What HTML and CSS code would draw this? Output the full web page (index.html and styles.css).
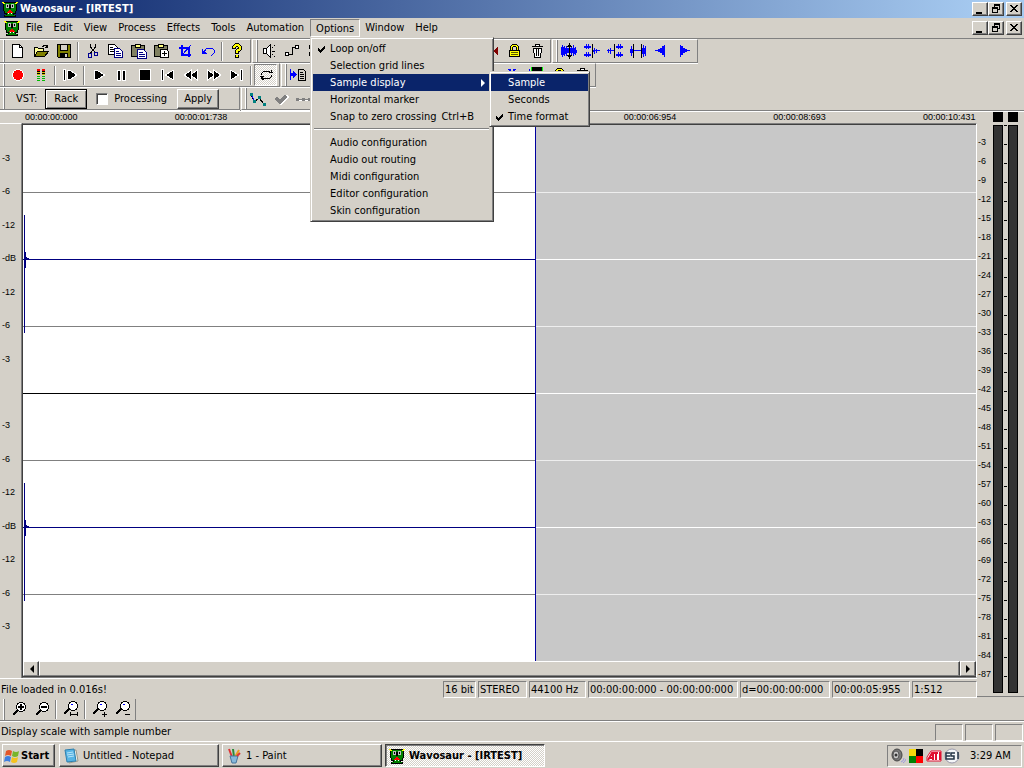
FILE: index.html
```html
<!DOCTYPE html>
<html lang="en">
<head>
<meta charset="utf-8">
<title>Wavosaur - [IRTEST]</title>
<link rel="stylesheet" href="styles.css">
</head>
<body>
<svg class="defs" aria-hidden="true">
  <symbol id="dino" viewBox="0 0 16 16">
    <path fill="#000" d="M1 1h14v9h-1v3h-2v1h2v2H2v-2h2v-1H2v-3H1z"/>
    <path fill="#008000" d="M2 2h12v8h-1v2H3v-2H2zM5 12h6v2h2v1H3v-1h2z"/>
    <path fill="#ff0" d="M0 1h2v1h1v1H1V2H0zM14 1h2v1h-1v1h-2V2h1z"/>
    <path fill="#000" d="M4 3h3v1h2V3h3v4H9v1H7V7H4z"/>
    <path fill="#c0c0c0" d="M4 3h3v4H4zM9 3h3v4H9z"/>
    <path fill="#000" d="M5 4h1v2H5zM10 4h1v2h-1z"/>
    <path fill="red" d="M7 9h2v1h1v1h1v1H5v-1h1v-1h1z"/>
    <path fill="#fff" d="M6 12h1v1H6zM9 12h1v1H9z"/>
  </symbol>
  <symbol id="min" viewBox="0 0 12 10"><path d="M2 8h6v2H2z"/></symbol>
  <symbol id="restore" viewBox="0 0 12 10"><path d="M4 0h6v6H8V5h1V2H5v1H4zM2 3h6v6H2zM3 5v3h4V5z" fill-rule="evenodd"/></symbol>
  <symbol id="close" viewBox="0 0 12 10"><path d="M2 1h2v1h1v1h2V2h1V1h2v1H9v1H8v1H7v1h1v1h1v1h1v1H8V7H7V6H5v1H4v1H2V7h1V6h1V5h1V4H4V3H3V2H2z"/></symbol>
  <symbol id="new" viewBox="0 0 16 16"><path fill="#fff" stroke="#000" d="M2.500 1.500h7l3 3v10h-10z"/><path fill="none" stroke="#000" d="M9.500 1.500v3h3"/></symbol>
  <symbol id="open" viewBox="0 0 16 16"><path fill="#ffff99" stroke="#000" d="M1.500 13.500v-9h3l1 1h5v3"/><path fill="#808000" stroke="#000" d="M1.500 13.500l3-5h11l-4 5z"/><path fill="none" stroke="#000" d="M9 3.500h1v-1h3v1h1v1M12 4.500h3M14.500 2v3"/></symbol>
  <symbol id="save" viewBox="0 0 16 16"><path fill="#808000" stroke="#000" d="M1.500 1.500h13v13h-12l-1-1z"/><path fill="#d4d0c8" stroke="#000" d="M4.500 1.500h7v6h-7z"/><path d="M4 10h8v5H4z"/><path fill="#d4d0c8" d="M9 11h2v3H9z"/></symbol>
  <symbol id="cut" viewBox="0 0 16 16"><path fill="none" stroke="#000" d="M5.500 1v3l5 6M10.500 1v3l-5 6"/><path fill="none" stroke="#000090" d="M3.500 10.500h3v4h-3zM9.500 9.500h3v3h-3z"/></symbol>
  <symbol id="copy" viewBox="0 0 16 16"><path fill="#fff" stroke="#000" d="M.5 1.500h6l3 3v7h-9z"/><path stroke="#000" d="M2 4.500h3M2 6.500h5M2 8.500h5"/><path fill="#fff" stroke="#000080" d="M6.500 5.500h5l3 3v6h-8z"/><path stroke="#000080" d="M8 8.500h3M8 10.500h5M8 12.500h5"/></symbol>
  <symbol id="paste" viewBox="0 0 16 16"><path fill="#808060" stroke="#000" d="M.5 2.500h13v11H.5z"/><path fill="#ffff80" stroke="#000" d="M4.500 1.500h5v3h-5z"/><path fill="#fff" stroke="#000080" d="M6.500 6.500h6l3 3v6h-9z"/><path stroke="#000080" d="M8 9.500h4M8 11.500h6M8 13.500h6"/></symbol>
  <symbol id="pasteplus" viewBox="0 0 16 16"><path fill="#808060" stroke="#000" d="M.5 2.500h13v11H.5z"/><path fill="#ffff80" stroke="#000" d="M4.500 1.500h5v3h-5z"/><path fill="#fff" stroke="#000" d="M6.500 6.500h6l2 2v6h-8zM8 10.500h5M10.500 8v5"/></symbol>
  <symbol id="crop" viewBox="0 0 16 16"><path fill="none" stroke="#00f" stroke-width="2" d="M5 2v10h9M2 5h10v9"/><path stroke="#00f" d="M5 12l9-10"/></symbol>
  <symbol id="undo" viewBox="0 0 16 16"><path fill="none" stroke="#00f" d="M4 9l3-4h5l2 2v3l-3 3"/><path fill="#00f" d="M2 6v5h5v-1H6V9H5V8H3V6z"/></symbol>
  <symbol id="help" viewBox="0 0 16 16"><path fill="none" stroke="#000" stroke-width="4" d="M5 6V4l2-2h2l2 2v2L8 8v3M8 12v3"/><path fill="none" stroke="#ff0" stroke-width="2" d="M5 5V4l2-2h2l2 2v2L8 8v2M8 12v2"/></symbol>
  <symbol id="speaker" viewBox="0 0 16 16"><path fill="#fff" stroke="#000" d="M2.500 5.500h3l4-4v13l-4-4h-3zM5.500 5v6"/><path stroke="#000" d="M11 4.500h1M13 2.500h1M11 8.500h3M11 11.500h1M13 13.500h1"/></symbol>
  <symbol id="auto" viewBox="0 0 16 16"><path fill="none" stroke="#000" d="M3.500 11.500h5v-7h3"/><path fill="#fff" stroke="#000" d="M1.500 9.500h3v3h-3zM11.500 2.500h3v3h-3z"/></symbol>
  <symbol id="nodes" viewBox="0 0 16 16"><path fill="#fff" stroke="#000" d="M2.500 2.500h3v3h-3zM2.500 9.500h3v3h-3zM5 4.500h8M5 11.500h8"/></symbol>
  <symbol id="lock" viewBox="0 0 16 16"><path fill="none" stroke="#000" stroke-width="3" d="M5.500 8V4l2-2h2l2 2v4"/><path fill="none" stroke="#ff0" d="M5.500 8V4l2-2h2l2 2v4"/><path fill="#ff0" stroke="#000" d="M3.500 7.500h10v6h-10z"/><path stroke="#555500" d="M5 9.500h7M5 11.500h7"/></symbol>
  <symbol id="trash" viewBox="0 0 16 16"><path fill="#fff" stroke="#000" d="M4.500 5.500h8l-1 9h-6zM3 3.500h11M6.500 3v-1.500h4V3M7.500 6v7M9.500 6v7"/></symbol>
  <symbol id="redarrow" viewBox="0 0 16 16"><path fill="#800000" d="M10 8l5-5v10z"/></symbol>
  <symbol id="w1" viewBox="0 0 16 16"><path fill="#00f" d="M0 4h1V2h1v2h1V3h1v2h1V3h1v2h4V3h1v2h1V2h1v3h1V4h1v3h1v3h-1v2h-1v-1h-1v2h-1v-3h-1v2h-1v-2H6v3H5v-2H4v2H3v-1H2v2H1v-2H0z"/><path stroke="#000" d="M8.500 0v16M6 3.500h5M6 12.500h5M7 2.500h3M7 13.500h3"/></symbol>
  <symbol id="w2" viewBox="0 0 16 16"><path fill="#00f" d="M0 3h2V1h1v2h1V1h1v2h2v2H5v1H4V5H3v1H2V5H0zM0 11h2V9h1v2h1V9h1v2h2v2H5v1H4v-1H3v1H2v-1H0zM9 7h1V5h1v2h1V6h1v1h3v1h-3v2h-1V8h-1v3h-1V9H9z"/><path stroke="#000" d="M8.500 1v14"/></symbol>
  <symbol id="w3" viewBox="0 0 16 16"><path fill="#00f" d="M0 7h1V6h1v1h1V5h1v2h3v1H4v3H3V8H2v2H1V8H0zM9 3h2V1h1v2h1V1h1v2h2v2h-2v1h-1V5h-1v1h-1V5H9zM9 11h2V9h1v2h1V9h1v2h2v2h-2v1h-1v-1h-1v1h-1v-1H9z"/><path stroke="#000" d="M7.500 1v14"/></symbol>
  <symbol id="w4" viewBox="0 0 16 16"><path fill="#00f" d="M0 6h1V3h1v3h1v4H2v3H1v-3H0zM3 7h10v1H3zM12 5h1V2h1v3h1V3h1v10h-1v-2h-1v3h-1v-3h-1z"/><path stroke="#000" d="M3.500 1v14M11.500 1v14"/></symbol>
  <symbol id="w5" viewBox="0 0 16 16"><path fill="#00f" d="M2 7h3V6h2V5h2V3h2V2h1v12h-1v-2H9v-2H7V9H5V8H2z"/></symbol>
  <symbol id="w6" viewBox="0 0 16 16"><path fill="#00f" d="M14 7h-3V6H9V5H7V3H5V2H4v12h1v-2h2v-2h2V9h2V8h3z"/></symbol>
  <symbol id="rec" viewBox="0 0 16 16"><circle cx="8" cy="8" r="5.500" fill="red" stroke="#fff"/></symbol>
  <symbol id="levels" viewBox="0 0 16 16"><path stroke="red" stroke-width="2" d="M4 3h3M9 3h3"/><path stroke="#d0c000" d="M4 5.500h3M9 5.500h3M4 7.500h3M9 7.500h3"/><path stroke="#0b0" d="M4 9.500h3M9 9.500h3M4 11.500h3M9 11.500h3M4 13.500h3M9 13.500h3"/><path stroke="#000" d="M4 4.500h3M9 4.500h3M4 6.500h3M9 6.500h3"/></symbol>
  <symbol id="playfrom" viewBox="0 0 16 16"><path class="halo" d="M2 3h1v10H2z"/><path class="halo" d="M6 4h2l6 4-6 4H6z"/></symbol>
  <symbol id="play" viewBox="0 0 16 16"><path class="halo" d="M4 4h2l7 4-7 4H4z"/></symbol>
  <symbol id="pause" viewBox="0 0 16 16"><path class="halo" d="M4 4h2v9H4zM9 4h2v9H9z"/></symbol>
  <symbol id="stop" viewBox="0 0 16 16"><path class="halo" d="M3 3h10v10H3z"/></symbol>
  <symbol id="prev" viewBox="0 0 16 16"><path class="halo" d="M2 3h1v10H2zM13 4v8L6 8z"/></symbol>
  <symbol id="rew" viewBox="0 0 16 16"><path class="halo" d="M8 4v8L2 8zM14 4v8L8 8z"/></symbol>
  <symbol id="ff" viewBox="0 0 16 16"><path class="halo" d="M2 4v8l6-4zM8 4v8l6-4z"/></symbol>
  <symbol id="next" viewBox="0 0 16 16"><path class="halo" d="M2 4v8l7-4zM12 3h1v10h-1z"/></symbol>
  <symbol id="loop" viewBox="0 0 16 16"><path fill="none" stroke="#000" d="M3.500 8V6.500l2-2h6l1 1M13.500 8v1.500l-2 2h-6l-1-1"/><path d="M2 9h4v1H5v1h1v2H4v-1H3v-2H2zM11 6h4V5h-1V3h-1v2h-2z"/></symbol>
  <symbol id="todoc" viewBox="0 0 16 16"><path fill="#00f" d="M0 2h1v4h2V4h1v1h1v1h1v1h1v1H6v1H5v1H4v1H3V9H1v4H0z"/><path fill="#d4d0c8" stroke="#000" d="M8.500 2.500h5l2 2v9h-7zM10 5.500h3M10 7.500h4M10 9.500h4M10 11.500h4"/></symbol>
  <symbol id="wx" viewBox="0 0 16 16"><path stroke="#00f" stroke-width="2" d="M4 2l6 8M10 2l-6 8"/></symbol>
  <symbol id="mark" viewBox="0 0 16 16"><path fill="#00f" d="M1 2h1v2h2v1H1z"/><path fill="#0f0" d="M3 0h12v6H3z"/><path d="M4 0h10v6H4z"/></symbol>
  <symbol id="curve" viewBox="0 0 16 16"><path fill="none" stroke="#000" d="M1 3l3 8 5-4 5 6"/><path fill="#008080" d="M0 2h3v3H0zM3 9h3v3H3zM8 5h3v3H8zM13 12h3v3h-3z"/><path stroke="#00f" d="M2 5l2 4"/></symbol>
  <symbol id="tick" viewBox="0 0 16 16"><path fill="none" stroke="#fff" stroke-width="3" d="M4 8l4 4 7-7"/><path fill="none" stroke="#808080" stroke-width="3" d="M3 7l4 4 6-6"/></symbol>
  <symbol id="dots" viewBox="0 0 16 16"><path stroke="#fff" d="M1 9.500h15"/><path stroke="#808080" d="M0 8.500h16"/><path fill="#808080" d="M0 7h3v3H0zM6 7h3v3H6zM12 7h3v3h-3z"/></symbol>
  <symbol id="zin" viewBox="0 0 16 16"><path stroke="#000" stroke-width="2" d="M2 14l5-5"/><circle cx="10" cy="6" r="4.500" fill="#fff" stroke="#000"/><path stroke="#000" stroke-width="2" d="M7 6h6M10 3v6"/></symbol>
  <symbol id="zout" viewBox="0 0 16 16"><path stroke="#000" stroke-width="2" d="M2 14l5-5"/><circle cx="10" cy="6" r="4.500" fill="#fff" stroke="#000"/><path stroke="#000" stroke-width="2" d="M7 6h6"/></symbol>
  <symbol id="zsel" viewBox="0 0 16 16"><path stroke="#000" stroke-width="2" d="M1 13l5-5"/><circle cx="10" cy="5" r="4.500" fill="#fff" stroke="#000"/><path stroke="#00f" d="M8 3.500h2"/><path stroke="#000" d="M7 13.500h8M7.500 11v4M14.500 11v4"/></symbol>
  <symbol id="zv" viewBox="0 0 16 16"><path stroke="#000" stroke-width="2" d="M1 13l5-5"/><circle cx="10" cy="5" r="4.500" fill="#fff" stroke="#000"/><path stroke="#00f" d="M8 3.500h2"/><path stroke="#000" d="M10 13.500h5M12.500 11v5"/></symbol>
  <symbol id="zvo" viewBox="0 0 16 16"><path stroke="#000" stroke-width="2" d="M1 13l5-5"/><circle cx="10" cy="5" r="4.500" fill="#fff" stroke="#000"/><path stroke="#00f" d="M8 3.500h2"/><path stroke="#000" d="M10 13.500h5"/></symbol>
  <symbol id="check" viewBox="0 0 8 8"><path d="M0 3h1v1h1v1h1V4h1V3h1V2h1V1h1v3H6v1H5v1H4v1H3v1H2V7H1V6H0z"/></symbol>
</svg>

<header class="titlebar">
  <svg class="ico"><use href="#dino"/></svg>
  <h1>Wavosaur - [IRTEST]</h1>
  <div class="winbtns">
    <button aria-label="Minimize"><svg><use href="#min"/></svg></button>
    <button aria-label="Restore"><svg><use href="#restore"/></svg></button>
    <button aria-label="Close"><svg><use href="#close"/></svg></button>
  </div>
</header>

<nav class="menubar">
  <svg class="ico"><use href="#dino"/></svg>
  <button>File</button><button>Edit</button><button>View</button><button>Process</button><button>Effects</button><button>Tools</button><button>Automation</button>
  <div class="dropdown">
    <button class="active">Options</button>
    <div class="menu menu-options">
      <button><svg class="check"><use href="#check"/></svg>Loop on/off</button>
      <button>Selection grid lines</button>
      <button class="selected">Sample display<i class="arrow"></i></button>
      <button>Horizontal marker</button>
      <button>Snap to zero crossing<kbd>Ctrl+B</kbd></button>
      <hr>
      <button>Audio configuration</button>
      <button>Audio out routing</button>
      <button>Midi configuration</button>
      <button>Editor configuration</button>
      <button>Skin configuration</button>
      <div class="menu menu-sub">
        <button class="selected">Sample</button>
        <button>Seconds</button>
        <button><svg class="check"><use href="#check"/></svg>Time format</button>
      </div>
    </div>
  </div>
  <button>Window</button><button>Help</button>
  <div class="winbtns">
    <button aria-label="Minimize document"><svg><use href="#min"/></svg></button>
    <button aria-label="Restore document"><svg><use href="#restore"/></svg></button>
    <button aria-label="Close document"><svg><use href="#close"/></svg></button>
  </div>
</nav>

<section class="toolbars">
  <div class="row">
    <div class="band">
      <button aria-label="New"><svg class="ico"><use href="#new"/></svg></button>
      <button aria-label="Open"><svg class="ico"><use href="#open"/></svg></button>
      <button aria-label="Save"><svg class="ico"><use href="#save"/></svg></button>
      <i class="sep"></i>
      <button aria-label="Cut"><svg class="ico"><use href="#cut"/></svg></button>
      <button aria-label="Copy"><svg class="ico"><use href="#copy"/></svg></button>
      <button aria-label="Paste"><svg class="ico"><use href="#paste"/></svg></button>
      <button aria-label="Paste mix"><svg class="ico"><use href="#pasteplus"/></svg></button>
      <button aria-label="Crop"><svg class="ico"><use href="#crop"/></svg></button>
      <button aria-label="Undo"><svg class="ico"><use href="#undo"/></svg></button>
      <i class="sep"></i>
      <button aria-label="Help"><svg class="ico"><use href="#help"/></svg></button>
    </div>
    <div class="band band-edit">
      <button aria-label="Volume"><svg class="ico"><use href="#speaker"/></svg></button>
      <button aria-label="Automation"><svg class="ico"><use href="#auto"/></svg></button>
      <button aria-label="Nodes"><svg class="ico"><use href="#nodes"/></svg></button>
      <button class="push" aria-label="Previous marker"><svg class="ico"><use href="#redarrow"/></svg></button>
      <button aria-label="Lock"><svg class="ico"><use href="#lock"/></svg></button>
      <button aria-label="Delete"><svg class="ico"><use href="#trash"/></svg></button>
    </div>
    <div class="band">
      <button aria-label="Zoom wave"><svg class="ico"><use href="#w1"/></svg></button>
      <button aria-label="Merge"><svg class="ico"><use href="#w2"/></svg></button>
      <button aria-label="Split"><svg class="ico"><use href="#w3"/></svg></button>
      <button aria-label="Silence"><svg class="ico"><use href="#w4"/></svg></button>
      <button aria-label="Fade in"><svg class="ico"><use href="#w5"/></svg></button>
      <button aria-label="Fade out"><svg class="ico"><use href="#w6"/></svg></button>
    </div>
  </div>
  <div class="row">
    <div class="band">
      <button aria-label="Record"><svg class="ico"><use href="#rec"/></svg></button>
      <button aria-label="Levels"><svg class="ico"><use href="#levels"/></svg></button>
      <i class="sep"></i>
      <button aria-label="Play from cursor"><svg class="ico"><use href="#playfrom"/></svg></button>
      <i class="sep"></i>
      <button aria-label="Play"><svg class="ico"><use href="#play"/></svg></button>
      <button aria-label="Pause"><svg class="ico"><use href="#pause"/></svg></button>
      <button aria-label="Stop"><svg class="ico"><use href="#stop"/></svg></button>
      <button aria-label="Start"><svg class="ico"><use href="#prev"/></svg></button>
      <button aria-label="Rewind"><svg class="ico"><use href="#rew"/></svg></button>
      <button aria-label="Forward"><svg class="ico"><use href="#ff"/></svg></button>
      <button aria-label="End"><svg class="ico"><use href="#next"/></svg></button>
      <i class="sep"></i>
      <button class="pressed" aria-label="Loop"><svg class="ico"><use href="#loop"/></svg></button>
    </div>
    <div class="band band-markers">
      <button aria-label="Export markers"><svg class="ico"><use href="#todoc"/></svg></button>
      <button class="push" aria-label="Cut markers"><svg class="ico"><use href="#wx"/></svg></button>
      <button aria-label="Mark"><svg class="ico"><use href="#mark"/></svg></button>
      <button aria-label="Lock markers"><svg class="ico"><use href="#lock"/></svg></button>
      <button aria-label="Delete markers"><svg class="ico"><use href="#trash"/></svg></button>
    </div>
  </div>
  <div class="row">
    <div class="band band-vst">
      <span>VST:</span>
      <button class="raised default">Rack</button>
      <label><input type="checkbox">Processing</label>
      <button class="raised">Apply</button>
    </div>
    <div class="band band-curve">
      <button aria-label="Envelope"><svg class="ico"><use href="#curve"/></svg></button>
      <button aria-label="Apply envelope" disabled><svg class="ico"><use href="#tick"/></svg></button>
      <button aria-label="Flat envelope" disabled><svg class="ico"><use href="#dots"/></svg></button>
    </div>
  </div>
</section>

<main class="document">
  <section class="editor">
    <div class="times"><span>00:00:00:000</span><span>00:00:01:738</span><span></span><span></span><span>00:00:06:954</span><span>00:00:08:693</span><span>00:00:10:431</span></div>
    <div class="view">
      <div class="db"><span>-3</span><span>-6</span><span>-12</span><span>-dB</span><span>-12</span><span>-6</span><span>-3</span><span></span><span>-3</span><span>-6</span><span>-12</span><span>-dB</span><span>-12</span><span>-6</span><span>-3</span></div>
      <div class="well">
        <div class="panes">
          <div class="pane wave">
            <i></i><i></i><i class="zero"></i><i></i><i class="split"></i><i></i><i class="zero"></i><i></i>
            <svg class="pulse" viewBox="0 0 6 118"><path d="M1 0h1v37h1v5h1v1h2v1H3v9H2v65H1z"/></svg>
            <svg class="pulse second" viewBox="0 0 6 118"><path d="M1 0h1v37h1v5h1v1h2v1H3v9H2v65H1z"/></svg>
          </div>
          <div class="pane empty"><i></i><i></i><i class="zero"></i><i></i><i class="zero"></i><i></i><i class="zero"></i><i></i></div>
        </div>
        <div class="scroll">
          <button aria-label="Scroll left"><i class="left"></i></button>
          <div class="thumb"></div>
          <button aria-label="Scroll right"><i class="right"></i></button>
        </div>
      </div>
    </div>
    <div class="info">
      <p>File loaded in 0.016s!</p>
      <span class="c1">16 bit</span><span class="c2">STEREO</span><span class="c3">44100 Hz</span><span class="c4">00:00:00:000 - 00:00:00:000</span><span class="c5">d=00:00:00:000</span><span class="c6">00:00:05:955</span><span class="c7">1:512</span>
    </div>
  </section>
  <aside class="meters">
    <div class="scale"><span>-3</span><span>-6</span><span>-9</span><span>-12</span><span>-15</span><span>-18</span><span>-21</span><span>-24</span><span>-27</span><span>-30</span><span>-33</span><span>-36</span><span>-39</span><span>-42</span><span>-45</span><span>-48</span><span>-51</span><span>-54</span><span>-57</span><span>-60</span><span>-63</span><span>-66</span><span>-69</span><span>-72</span><span>-75</span><span>-78</span><span>-81</span><span>-84</span><span>-87</span></div>
    <div class="meter"><i></i><b></b></div>
    <div class="ticks"></div>
    <div class="meter"><i></i><b></b></div>
  </aside>
</main>

<section class="zoombar">
  <button aria-label="Zoom in"><svg class="ico"><use href="#zin"/></svg></button>
  <button aria-label="Zoom out"><svg class="ico"><use href="#zout"/></svg></button>
  <i class="sep"></i>
  <button aria-label="Zoom selection"><svg class="ico"><use href="#zsel"/></svg></button>
  <i class="sep"></i>
  <button aria-label="Vertical zoom in"><svg class="ico"><use href="#zv"/></svg></button>
  <button aria-label="Vertical zoom out"><svg class="ico"><use href="#zvo"/></svg></button>
</section>

<footer class="statusbar"><p>Display scale with sample number</p><span></span><span></span><span></span></footer>

<section class="taskbar">
  <button class="task start">
    <svg class="ico smooth" viewBox="0 0 16 16"><path fill="#e3562a" d="M2 3q3-2 6 0L7 8Q4 6 1 8z"/><path fill="#78b52c" d="M9 3q3 2 6 0l-1 5q-3 2-6 0z"/><path fill="#3f7fe0" d="M1 9q3-2 6 0l-1 5q-3-2-6 0z"/><path fill="#f5c21d" d="M8 9q3 2 6 0l-1 5q-3 2-6 0z"/></svg>Start</button>
  <button class="task">
    <svg class="ico smooth" viewBox="0 0 16 16"><path fill="#f4f4ee" stroke="#9a9a8a" d="M5 3l8-1 2 11-9 2z"/><path fill="#56b4e4" stroke="#2d7fae" d="M2 2l9-1 2 12-9 1z"/><path stroke="#b8e4f8" d="M4 5l6-1M4 7l7-1M5 9l6-1"/></svg>Untitled - Notepad</button>
  <button class="task">
    <svg class="ico smooth" viewBox="0 0 16 16"><path stroke="#d33" stroke-width="2" d="M3 1l3 8"/><path stroke="#2a8a3a" stroke-width="2" d="M7 1l1 8"/><path stroke="#e8a020" stroke-width="2" d="M13 2l-4 7"/><path fill="#86b8dc" stroke="#47749b" d="M4 8h8l-2 7H6z"/><path stroke="#d33" stroke-width="2" d="M11 8l3-3"/></svg>1 - Paint</button>
  <button class="task current"><svg class="ico"><use href="#dino"/></svg>Wavosaur - [IRTEST]</button>
  <div class="tray">
    <svg class="ico smooth" viewBox="0 0 16 16"><ellipse cx="7" cy="7" rx="5" ry="6" fill="#777" stroke="#444"/><ellipse cx="6" cy="7" rx="3" ry="4" fill="#ccc" stroke="#555"/><circle cx="6" cy="7" r="1.500" fill="#333"/><path fill="none" stroke="#9a9ae0" d="M11 14q3-1 3-4M13 15q2-1 3-4"/></svg>
    <svg class="ico" viewBox="0 0 16 16"><path fill="#f4d80c" d="M1 1h7v7H1z"/><path d="M8 1h7v7H8z"/><path fill="#008000" d="M1 8h7v7H1z"/><path fill="red" d="M8 8h7v7H8z"/></svg>
    <svg class="ico smooth" viewBox="0 0 16 16"><path fill="#fff" stroke="#e01030" d="M5 3h10v10H1v-4z"/><path fill="none" stroke="#e01030" stroke-width="2" d="M2 12l4-7h1v7M4 10h3M8 5h4M10 5v7M14 4v8"/></svg>
    <svg class="ico smooth" viewBox="0 0 16 16"><circle cx="8" cy="8" r="7" fill="#f4f6f8" stroke="#99a"/><path fill="none" stroke="#234" stroke-width="1.500" d="M6 5H2v6h4M2 8h4M11 5H7v3h3v3H6M14 4v7"/></svg>
    <time>3:29 AM</time>
  </div>
</section>
</body>
</html>
```
FILE: styles.css
```css
:root {
  --face: #d4d0c8;
  --shade: #808080;
  --dark: #404040;
  --navy: #0a246a;
}

* { box-sizing: border-box; }

body {
  margin: 0;
  height: 100vh;
  display: flex;
  flex-direction: column;
  background: var(--face);
  color: #000;
  font: 11px/14px "DejaVu Sans Condensed", "DejaVu Sans", sans-serif;
  white-space: nowrap;
  overflow: hidden;
}

button {
  margin: 0;
  padding: 0;
  border: 0;
  background: none;
  color: inherit;
  font: inherit;
  text-align: left;
}

h1, p { margin: 0; font-size: inherit; }
svg { shape-rendering: crispEdges; display: block; flex: none; }
.defs { display: none; }
.ico { width: 16px; height: 16px; }
.smooth { shape-rendering: auto; }
.halo { stroke: #fff; stroke-width: 2px; paint-order: stroke; }

.titlebar {
  display: flex;
  align-items: center;
  gap: 2px;
  height: 18px;
  flex: none;
  padding: 0 2px;
  background: linear-gradient(90deg, #0a246a, #a6caf0 96%);
  color: #fff;
}
.titlebar h1 { font-weight: bold; }

.winbtns { display: flex; margin-left: auto; }
.winbtns button {
  width: 16px;
  height: 14px;
  border: 1px solid;
  border-color: #fff var(--dark) var(--dark) #fff;
  box-shadow: inset -1px -1px var(--shade);
  background: var(--face);
}
.winbtns button:last-child { margin-left: 2px; }
.winbtns svg { width: 12px; height: 10px; margin: 0 1px; }

.menubar {
  display: flex;
  align-items: center;
  height: 20px;
  flex: none;
  padding: 0 2px 0 4px;
}
.menubar > button { height: 18px; padding: 0 6px 0 5px; }
.menubar > .ico { margin-right: 1px; }
.dropdown { position: relative; }
.dropdown > .active {
  height: 18px;
  padding: 1px 5px 0;
  border: 1px solid;
  border-color: var(--shade) #fff #fff var(--shade);
}

.menu {
  position: absolute;
  padding: 2px 1px 1px;
  background: var(--face);
  border: 1px solid;
  border-color: var(--face) var(--dark) var(--dark) var(--face);
  box-shadow: inset 1px 1px #fff, inset -1px -1px var(--shade);
  z-index: 2;
}
.menu button {
  display: flex;
  align-items: center;
  position: relative;
  width: 100%;
  height: 17px;
  padding: 0 16px 0 17px;
}
.menu .selected { background: var(--navy); color: #fff; }
.menu hr { margin: 3px 1px 4px; border: 0; border-top: 1px solid var(--shade); border-bottom: 1px solid #fff; }
.menu kbd { margin-left: auto; font: inherit; }
.menu-options { top: 18px; left: 0; width: 184px; padding: 2px 3px 2px 2px; }
.menu-sub { top: 33px; left: 178px; width: 101px; }
.check { position: absolute; left: 5px; width: 8px; height: 8px; }
.arrow, .left, .right { width: 0; height: 0; border: 4px solid transparent; }
.arrow { margin: 0 -15px 0 auto; border-left-color: #fff; }
.right { border-left-color: #000; margin-left: 3px; }
.left { border-right-color: #000; margin-right: 3px; }

.toolbars { flex: none; border-top: 1px solid var(--shade); border-bottom: 1px solid #fff; }
.row { display: flex; height: 24px; }
.row:last-child { border-bottom: 1px solid var(--shade); }
.band {
  display: flex;
  align-items: center;
  padding: 0 2px 0 6px;
  border: 1px solid;
  border-color: #fff var(--shade) var(--shade) #fff;
  border-left: 0;
  box-shadow: 0 1px #fff;
}
.band, .zoombar {
  background: linear-gradient(90deg, transparent 3px, #fff 3px 4px, var(--shade) 4px 5px, transparent 5px);
}
.band + .band { margin-left: 1px; padding-left: 4px; border-left: 1px solid #fff; }
.band button:not(.raised), .zoombar button {
  display: grid;
  place-items: center;
  width: 23px;
  height: 22px;
}
.sep { width: 2px; height: 19px; margin: 0 2px; background: var(--shade); border-right: 1px solid #fff; }
.band-edit { width: 299px; }
.band-markers { width: 315px; }
.band .push { margin-left: auto; }
.band .pressed {
  border: 1px solid;
  border-color: var(--shade) #fff #fff var(--shade);
  background: conic-gradient(#fff 25%, var(--face) 0 50%, #fff 0 75%, var(--face) 0) 0 0 / 2px 2px;
}
.band-vst { width: 240px; padding-left: 16px; }
.row .band-curve { width: 250px; }
.raised {
  width: 42px;
  height: 20px;
  border: 1px solid;
  border-color: #fff var(--dark) var(--dark) #fff;
  box-shadow: inset -1px -1px var(--shade);
  text-align: center;
}
.default { margin-left: 8px; border-color: #000; box-shadow: inset 1px 1px #fff, inset -1px -1px var(--shade); }
.band-vst label { display: flex; align-items: center; gap: 6px; width: 81px; margin: 0 0 0 9px; }
.band-vst input {
  appearance: none;
  margin: 0;
  width: 12px;
  height: 12px;
  background: #fff;
  border: 1px solid;
  border-color: var(--shade) #fff #fff var(--shade);
  box-shadow: inset 1px 1px var(--dark);
}

.document { display: flex; flex: 1; min-height: 0; }
.editor { display: flex; flex-direction: column; flex: 1; min-width: 0; }
.times {
  display: flex;
  justify-content: space-between;
  height: 11px;
  padding-left: 25px;
  font: 9px/11px "Liberation Sans", sans-serif;
}
.times span { width: 54px; }
.view { display: flex; flex: 1; min-height: 0; border-bottom: 1px solid #fff; }
.db {
  display: flex;
  flex-direction: column;
  width: 22px;
  padding: 17px 0 35px 2px;
  border-top: 1px solid #fff;
  border-right: 1px solid var(--shade);
  font: 9px/10px "Liberation Sans", sans-serif;
}
.db span { flex: 1; display: flex; align-items: center; }
.well {
  display: flex;
  flex-direction: column;
  flex: 1;
  border: 1px solid;
  border-color: var(--shade) #fff var(--shade) var(--dark);
  box-shadow: inset 0 1px var(--dark);
  padding-top: 1px;
}
.panes { display: flex; flex: 1; }
.pane { position: relative; display: grid; grid-template-rows: repeat(8, 1fr); }
.pane i + i { border-top: 1px solid #808080; }
.wave { flex: 513; background: #fff; border-right: 1px solid #0000a0; }
.wave i + i.zero { border-color: #000080; }
.wave i + i.split { border-color: #000; }
.empty { flex: 441; background: #c8c8c8; }
.empty i + i { border-color: #eee; }
.empty i + i.zero { border-color: #fff; }
.pulse { position: absolute; left: 0; top: calc(25% - 44px); width: 6px; height: 118px; fill: #000080; }
.second { top: calc(75% - 44px); }

.scroll { display: flex; height: 16px; border-bottom: 1px solid var(--dark); }
.scroll button, .thumb {
  border: 1px solid;
  border-color: #fff var(--dark) var(--shade) #fff;
  box-shadow: inset -1px 0 var(--shade);
}
.scroll button { display: grid; place-items: center; width: 16px; }
.thumb { flex: 1; }

.info { display: flex; align-items: center; gap: 2px; height: 20px; padding: 1px 0 0 1px; }
.info p { flex: 1; }
.info span, .statusbar span {
  height: 17px;
  padding: 1px 0 0 1px;
  border: 1px solid;
  border-color: var(--shade) #fff #fff var(--shade);
}
.c1 { width: 33px; }
.c2 { width: 49px; }
.c3 { width: 57px; }
.c4 { width: 150px; }
.c5 { width: 90px; }
.c6 { width: 78px; }
.c7 { width: 65px; }

.meters { display: flex; width: 47px; padding-bottom: 3px; border-bottom: 1px solid var(--shade); margin-bottom: 2px; }
.scale {
  width: 16px;
  padding: 21px 0 0 1px;
  font: 9px/19px "Liberation Sans", sans-serif;
}
.scale span { display: block; height: 19px; }
.meter { display: flex; flex-direction: column; gap: 3px; width: 10px; }
.meter i { height: 10px; background: #000; }
.meter b { flex: 1; background: #333; border: 1px solid #000; }
.ticks {
  width: 3px;
  margin: 13px 1px 0;
  background: repeating-linear-gradient(#000 0 1px, transparent 1px 19px);
}

.zoombar { display: flex; align-items: center; width: 136px; height: 21px; flex: none; padding: 0 0 1px 7px; border-right: 1px solid var(--shade); }

.statusbar {
  display: flex;
  align-items: center;
  gap: 2px;
  height: 21px;
  flex: none;
  padding: 2px 1px 0;
  border-top: 1px solid var(--shade);
  box-shadow: inset 0 1px #fff;
}
.statusbar p { flex: 1; }
.statusbar span { width: 28px; }

.taskbar {
  display: flex;
  align-items: center;
  gap: 3px;
  height: 27px;
  flex: none;
  padding: 1px 2px 0;
  border-top: 1px solid #fff;
}
.task {
  display: flex;
  align-items: center;
  gap: 4px;
  width: 160px;
  height: 23px;
  padding: 0 3px;
  border: 1px solid;
  border-color: #fff var(--dark) var(--dark) #fff;
  box-shadow: inset -1px -1px var(--shade);
}
.start { width: 53px; gap: 1px; padding: 0 1px; margin-right: 1px; font-weight: bold; }
.current {
  font-weight: bold;
  border-color: var(--dark) #fff #fff var(--dark);
  box-shadow: inset 1px 1px var(--shade);
  background: conic-gradient(#fff 25%, var(--face) 0 50%, #fff 0 75%, var(--face) 0) 0 0 / 2px 2px;
}
.tray {
  display: flex;
  align-items: center;
  gap: 2px;
  width: 135px;
  height: 22px;
  margin-left: auto;
  padding: 0 2px;
  border: 1px solid;
  border-color: var(--shade) #fff #fff var(--shade);
}
.tray time { margin-left: 8px; }
```
